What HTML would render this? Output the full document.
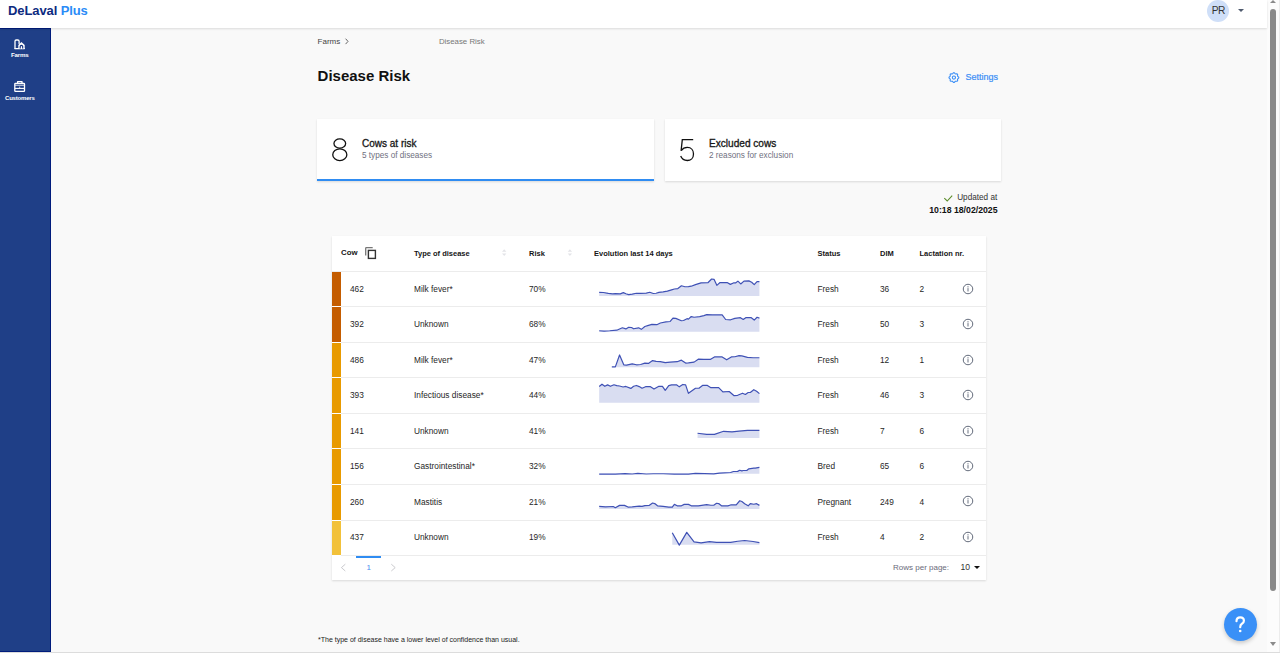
<!DOCTYPE html>
<html><head><meta charset="utf-8">
<style>
*{margin:0;padding:0;box-sizing:border-box}
html,body{width:1280px;height:653px;overflow:hidden;background:#f9f9f9;font-family:"Liberation Sans",sans-serif;color:#161616}
.a{position:absolute;white-space:nowrap}
#hdr{position:absolute;z-index:2;left:0;top:0;width:1267px;height:28px;background:#fff;box-shadow:0 1px 2px rgba(0,0,0,0.12)}
#side{position:absolute;left:0;top:28px;width:51px;height:624px;border-top:1px solid #001c7c;background:#1f3f87;border-right:1px solid #001c7c;border-bottom:1px solid #001c7c}
.card{position:absolute;background:#fff;box-shadow:0 1px 2px rgba(0,0,0,0.13)}
.t8{font-size:8px}
.th{font-size:7.5px;font-weight:bold;color:#161616}
.td{font-size:8.3px;color:#262626}
</style></head><body>
<div id="hdr">
  <div class="a" style="left:8px;top:2.7px;font-size:13px;font-weight:bold;color:#0d2a80;letter-spacing:-0.1px">DeLaval <span style="color:#2a8bf7">Plus</span></div>
  <div class="a" style="left:1207px;top:-0.5px;width:22px;height:22px;border-radius:50%;background:#cfdff8"></div>
  <div class="a" style="left:1211.8px;top:5.2px;font-size:10.2px;letter-spacing:-0.7px;color:#333">PR</div>
  <div class="a" style="left:1238.2px;top:9.3px;width:0;height:0;border-left:3.1px solid transparent;border-right:3.1px solid transparent;border-top:3.7px solid #4f5a6e"></div>
</div>
<div id="side"></div>
<div class="a" style="left:11px;top:51.3px;font-size:6.2px;letter-spacing:-0.2px;font-weight:bold;color:#fff">Farms</div>
<div class="a" style="left:5px;top:94.5px;font-size:6px;letter-spacing:-0.2px;font-weight:bold;color:#fff">Customers</div>

<div class="a t8" style="left:317.6px;top:36.5px;color:#444">Farms</div>
<svg class="a" style="left:340px;top:34px" width="12" height="14" viewBox="340 34 12 14"><path d="M345.6,38.7 L348,41.4 L345.6,44.1" fill="none" stroke="#555" stroke-width="0.9"/></svg>
<div class="a" style="left:438.9px;top:36.6px;font-size:7.85px;color:#777">Disease Risk</div>
<div class="a" style="left:317.6px;top:66.5px;font-size:15px;font-weight:bold;color:#111">Disease Risk</div>
<div class="a" style="left:965.6px;top:71.6px;font-size:9px;color:#3a8ef6;-webkit-text-stroke:0.2px #3a8ef6">Settings</div>

<div class="card" style="left:317px;top:119px;width:337px;height:62px"></div>
<div class="a" style="left:317px;top:179px;width:337px;height:2px;background:#2f8cf2"></div>
<div class="card" style="left:665px;top:119px;width:336px;height:62px"></div>
<div class="a" style="left:362px;top:138px;font-size:10px;color:#161616;-webkit-text-stroke:0.3px #161616">Cows at risk</div>
<div class="a" style="left:362px;top:150.5px;font-size:8.2px;color:#6f6f80">5 types of diseases</div>
<div class="a" style="left:709px;top:138px;font-size:10.1px;color:#161616;-webkit-text-stroke:0.3px #161616">Excluded cows</div>
<div class="a" style="left:709px;top:151px;font-size:8.2px;color:#6f6f80">2 reasons for exclusion</div>

<div class="a" style="left:957.2px;top:192.6px;font-size:8.2px;color:#333">Updated at</div>
<div class="a" style="left:929.2px;top:204.8px;font-size:8.72px;font-weight:bold;color:#111">10:18 18/02/2025</div>

<div class="card" style="left:332px;top:236px;width:654px;height:344px"></div>
<div class="a" style="left:332px;top:271px;width:654px;height:1px;background:#ececec"></div>
<div class="a th" style="left:341px;top:247.6px;font-size:7.8px">Cow</div>
<div class="a th" style="left:414px;top:248.7px">Type of disease</div>
<div class="a th" style="left:529px;top:248.7px">Risk</div>
<div class="a th" style="left:594px;top:248.7px">Evolution last 14 days</div>
<div class="a th" style="left:817.5px;top:248.7px">Status</div>
<div class="a th" style="left:880px;top:248.7px">DIM</div>
<div class="a th" style="left:919.5px;top:248.7px">Lactation nr.</div>
<div class="a" style="left:332px;top:271.70px;width:8.5px;height:34.55px;background:#c45c00"></div>
<div class="a" style="left:340.5px;top:306.25px;width:645.5px;height:1px;background:#ececec"></div>
<div class="a td" style="left:350px;top:283.60px">462</div>
<div class="a td" style="left:414px;top:283.60px">Milk fever*</div>
<div class="a td" style="left:529px;top:283.60px">70%</div>
<div class="a td" style="left:817.5px;top:283.60px">Fresh</div>
<div class="a td" style="left:880px;top:283.60px">36</div>
<div class="a td" style="left:919.5px;top:283.60px">2</div>
<svg class="a" style="left:962px;top:282.50px" width="12" height="12" viewBox="0 0 12 12"><circle cx="6" cy="6" r="4.75" fill="none" stroke="#5a6273" stroke-width="0.95"/><circle cx="6" cy="3.8" r="0.65" fill="#5a6273"/><rect x="5.55" y="5.1" width="0.9" height="3.4" fill="#5a6273"/></svg>
<div class="a" style="left:332px;top:307.25px;width:8.5px;height:34.55px;background:#c45c00"></div>
<div class="a" style="left:340.5px;top:341.80px;width:645.5px;height:1px;background:#ececec"></div>
<div class="a td" style="left:350px;top:319.10px">392</div>
<div class="a td" style="left:414px;top:319.10px">Unknown</div>
<div class="a td" style="left:529px;top:319.10px">68%</div>
<div class="a td" style="left:817.5px;top:319.10px">Fresh</div>
<div class="a td" style="left:880px;top:319.10px">50</div>
<div class="a td" style="left:919.5px;top:319.10px">3</div>
<svg class="a" style="left:962px;top:318.00px" width="12" height="12" viewBox="0 0 12 12"><circle cx="6" cy="6" r="4.75" fill="none" stroke="#5a6273" stroke-width="0.95"/><circle cx="6" cy="3.8" r="0.65" fill="#5a6273"/><rect x="5.55" y="5.1" width="0.9" height="3.4" fill="#5a6273"/></svg>
<div class="a" style="left:332px;top:342.80px;width:8.5px;height:34.55px;background:#e89a00"></div>
<div class="a" style="left:340.5px;top:377.35px;width:645.5px;height:1px;background:#ececec"></div>
<div class="a td" style="left:350px;top:355.00px">486</div>
<div class="a td" style="left:414px;top:355.00px">Milk fever*</div>
<div class="a td" style="left:529px;top:355.00px">47%</div>
<div class="a td" style="left:817.5px;top:355.00px">Fresh</div>
<div class="a td" style="left:880px;top:355.00px">12</div>
<div class="a td" style="left:919.5px;top:355.00px">1</div>
<svg class="a" style="left:962px;top:353.90px" width="12" height="12" viewBox="0 0 12 12"><circle cx="6" cy="6" r="4.75" fill="none" stroke="#5a6273" stroke-width="0.95"/><circle cx="6" cy="3.8" r="0.65" fill="#5a6273"/><rect x="5.55" y="5.1" width="0.9" height="3.4" fill="#5a6273"/></svg>
<div class="a" style="left:332px;top:378.35px;width:8.5px;height:34.55px;background:#e89a00"></div>
<div class="a" style="left:340.5px;top:412.90px;width:645.5px;height:1px;background:#ececec"></div>
<div class="a td" style="left:350px;top:390.30px">393</div>
<div class="a td" style="left:414px;top:390.30px">Infectious disease*</div>
<div class="a td" style="left:529px;top:390.30px">44%</div>
<div class="a td" style="left:817.5px;top:390.30px">Fresh</div>
<div class="a td" style="left:880px;top:390.30px">46</div>
<div class="a td" style="left:919.5px;top:390.30px">3</div>
<svg class="a" style="left:962px;top:389.20px" width="12" height="12" viewBox="0 0 12 12"><circle cx="6" cy="6" r="4.75" fill="none" stroke="#5a6273" stroke-width="0.95"/><circle cx="6" cy="3.8" r="0.65" fill="#5a6273"/><rect x="5.55" y="5.1" width="0.9" height="3.4" fill="#5a6273"/></svg>
<div class="a" style="left:332px;top:413.90px;width:8.5px;height:34.55px;background:#e89a00"></div>
<div class="a" style="left:340.5px;top:448.45px;width:645.5px;height:1px;background:#ececec"></div>
<div class="a td" style="left:350px;top:426.10px">141</div>
<div class="a td" style="left:414px;top:426.10px">Unknown</div>
<div class="a td" style="left:529px;top:426.10px">41%</div>
<div class="a td" style="left:817.5px;top:426.10px">Fresh</div>
<div class="a td" style="left:880px;top:426.10px">7</div>
<div class="a td" style="left:919.5px;top:426.10px">6</div>
<svg class="a" style="left:962px;top:425.00px" width="12" height="12" viewBox="0 0 12 12"><circle cx="6" cy="6" r="4.75" fill="none" stroke="#5a6273" stroke-width="0.95"/><circle cx="6" cy="3.8" r="0.65" fill="#5a6273"/><rect x="5.55" y="5.1" width="0.9" height="3.4" fill="#5a6273"/></svg>
<div class="a" style="left:332px;top:449.45px;width:8.5px;height:34.55px;background:#e89a00"></div>
<div class="a" style="left:340.5px;top:484.00px;width:645.5px;height:1px;background:#ececec"></div>
<div class="a td" style="left:350px;top:461.10px">156</div>
<div class="a td" style="left:414px;top:461.10px">Gastrointestinal*</div>
<div class="a td" style="left:529px;top:461.10px">32%</div>
<div class="a td" style="left:817.5px;top:461.10px">Bred</div>
<div class="a td" style="left:880px;top:461.10px">65</div>
<div class="a td" style="left:919.5px;top:461.10px">6</div>
<svg class="a" style="left:962px;top:460.00px" width="12" height="12" viewBox="0 0 12 12"><circle cx="6" cy="6" r="4.75" fill="none" stroke="#5a6273" stroke-width="0.95"/><circle cx="6" cy="3.8" r="0.65" fill="#5a6273"/><rect x="5.55" y="5.1" width="0.9" height="3.4" fill="#5a6273"/></svg>
<div class="a" style="left:332px;top:485.00px;width:8.5px;height:34.55px;background:#e89a00"></div>
<div class="a" style="left:340.5px;top:519.55px;width:645.5px;height:1px;background:#ececec"></div>
<div class="a td" style="left:350px;top:496.50px">260</div>
<div class="a td" style="left:414px;top:496.50px">Mastitis</div>
<div class="a td" style="left:529px;top:496.50px">21%</div>
<div class="a td" style="left:817.5px;top:496.50px">Pregnant</div>
<div class="a td" style="left:880px;top:496.50px">249</div>
<div class="a td" style="left:919.5px;top:496.50px">4</div>
<svg class="a" style="left:962px;top:495.40px" width="12" height="12" viewBox="0 0 12 12"><circle cx="6" cy="6" r="4.75" fill="none" stroke="#5a6273" stroke-width="0.95"/><circle cx="6" cy="3.8" r="0.65" fill="#5a6273"/><rect x="5.55" y="5.1" width="0.9" height="3.4" fill="#5a6273"/></svg>
<div class="a" style="left:332px;top:520.55px;width:8.5px;height:34.55px;background:#f2c13a"></div>
<div class="a" style="left:340.5px;top:555.10px;width:645.5px;height:1px;background:#ececec"></div>
<div class="a td" style="left:350px;top:532.20px">437</div>
<div class="a td" style="left:414px;top:532.20px">Unknown</div>
<div class="a td" style="left:529px;top:532.20px">19%</div>
<div class="a td" style="left:817.5px;top:532.20px">Fresh</div>
<div class="a td" style="left:880px;top:532.20px">4</div>
<div class="a td" style="left:919.5px;top:532.20px">2</div>
<svg class="a" style="left:962px;top:531.10px" width="12" height="12" viewBox="0 0 12 12"><circle cx="6" cy="6" r="4.75" fill="none" stroke="#5a6273" stroke-width="0.95"/><circle cx="6" cy="3.8" r="0.65" fill="#5a6273"/><rect x="5.55" y="5.1" width="0.9" height="3.4" fill="#5a6273"/></svg>
<svg class="a" style="left:590px;top:272px" width="180" height="70" viewBox="0 0 1280 498"><polygon points="65,145 95,146 130,152 160,156 180,154 215,156 237,147 255,155 275,161 300,157 330,151 360,152 400,150 425,144 450,153 470,151 490,145 520,141 550,136 580,127 600,121 625,118 650,98 675,105 700,104 720,101 750,90 790,77 840,75 865,50 882,52 902,95 925,75 975,75 998,88 1020,78 1035,78 1052,65 1072,85 1095,65 1130,63 1150,73 1168,90 1188,68 1205,68 1205,170 65,170" fill="#d9ddf1"/><polyline points="65,145 95,146 130,152 160,156 180,154 215,156 237,147 255,155 275,161 300,157 330,151 360,152 400,150 425,144 450,153 470,151 490,145 520,141 550,136 580,127 600,121 625,118 650,98 675,105 700,104 720,101 750,90 790,77 840,75 865,50 882,52 902,95 925,75 975,75 998,88 1020,78 1035,78 1052,65 1072,85 1095,65 1130,63 1150,73 1168,90 1188,68 1205,68" fill="none" stroke="#3f51b5" stroke-width="8.5" stroke-linejoin="round"/><polygon points="65,418 100,420 140,418 190,414 230,397 255,405 275,393 295,395 310,404 345,397 365,408 390,388 410,382 440,373 475,375 500,363 540,355 570,352 590,328 610,330 650,347 665,345 690,332 700,335 720,317 740,322 780,318 810,310 830,303 870,305 940,305 965,338 1000,340 1030,330 1070,325 1090,338 1110,324 1145,324 1168,342 1188,322 1205,328 1205,425 65,425" fill="#d9ddf1"/><polyline points="65,418 100,420 140,418 190,414 230,397 255,405 275,393 295,395 310,404 345,397 365,408 390,388 410,382 440,373 475,375 500,363 540,355 570,352 590,328 610,330 650,347 665,345 690,332 700,335 720,317 740,322 780,318 810,310 830,303 870,305 940,305 965,338 1000,340 1030,330 1070,325 1090,338 1110,324 1145,324 1168,342 1188,322 1205,328" fill="none" stroke="#3f51b5" stroke-width="8.5" stroke-linejoin="round"/></svg>
<svg class="a" style="left:590px;top:343px" width="180" height="70" viewBox="0 0 1280 498"><polygon points="155,170 180,170 210,85 240,155 260,157 300,148 330,155 360,153 390,143 415,145 445,125 470,131 500,132 535,140 570,136 620,133 650,122 680,143 700,142 740,136 770,115 810,117 855,117 885,99 940,99 972,120 1005,99 1030,98 1060,90 1080,92 1120,102 1160,105 1205,105 1205,172 155,172" fill="#d9ddf1"/><polyline points="155,170 180,170 210,85 240,155 260,157 300,148 330,155 360,153 390,143 415,145 445,125 470,131 500,132 535,140 570,136 620,133 650,122 680,143 700,142 740,136 770,115 810,117 855,117 885,99 940,99 972,120 1005,99 1030,98 1060,90 1080,92 1120,102 1160,105 1205,105" fill="none" stroke="#3f51b5" stroke-width="8.5" stroke-linejoin="round"/><polygon points="65,310 85,293 105,308 125,298 145,308 170,297 190,303 210,306 235,313 255,309 290,323 310,308 330,302 350,310 370,322 395,311 430,311 455,328 490,308 515,308 535,337 560,303 580,298 615,297 635,312 660,295 680,298 700,358 750,322 775,322 800,302 835,302 860,318 915,318 945,348 990,345 1025,375 1050,372 1085,357 1105,366 1125,352 1140,352 1165,332 1185,343 1205,360 1205,425 65,425" fill="#d9ddf1"/><polyline points="65,310 85,293 105,308 125,298 145,308 170,297 190,303 210,306 235,313 255,309 290,323 310,308 330,302 350,310 370,322 395,311 430,311 455,328 490,308 515,308 535,337 560,303 580,298 615,297 635,312 660,295 680,298 700,358 750,322 775,322 800,302 835,302 860,318 915,318 945,348 990,345 1025,375 1050,372 1085,357 1105,366 1125,352 1140,352 1165,332 1185,343 1205,360" fill="none" stroke="#3f51b5" stroke-width="8.5" stroke-linejoin="round"/></svg>
<svg class="a" style="left:590px;top:414px" width="180" height="70" viewBox="0 0 1280 498"><polygon points="765,137 830,145 885,145 950,123 1010,127 1060,122 1120,117 1205,117 1205,170 765,170" fill="#d9ddf1"/><polyline points="765,137 830,145 885,145 950,123 1010,127 1060,122 1120,117 1205,117" fill="none" stroke="#3f51b5" stroke-width="8.5" stroke-linejoin="round"/><polygon points="65,428 180,428 250,424 300,427 340,423 400,427 450,425 520,425 600,428 700,428 750,423 880,426 920,420 1000,416 1020,409 1050,408 1065,400 1080,405 1090,402 1115,402 1130,390 1165,385 1175,385 1205,380 1205,425 65,425" fill="#d9ddf1"/><polyline points="65,428 180,428 250,424 300,427 340,423 400,427 450,425 520,425 600,428 700,428 750,423 880,426 920,420 1000,416 1020,409 1050,408 1065,400 1080,405 1090,402 1115,402 1130,390 1165,385 1175,385 1205,380" fill="none" stroke="#3f51b5" stroke-width="8.5" stroke-linejoin="round"/></svg>
<svg class="a" style="left:590px;top:485px" width="180" height="70" viewBox="0 0 1280 498"><polygon points="65,152 110,155 165,153 180,162 210,145 245,145 270,157 300,155 350,150 370,152 390,147 420,146 445,128 460,132 480,148 520,152 560,157 585,157 600,138 620,148 650,148 670,138 700,138 720,148 770,148 830,140 860,144 880,144 900,130 915,132 935,148 980,148 1000,142 1040,142 1065,112 1080,117 1100,133 1125,148 1140,132 1165,137 1185,133 1205,145 1205,170 65,170" fill="#d9ddf1"/><polyline points="65,152 110,155 165,153 180,162 210,145 245,145 270,157 300,155 350,150 370,152 390,147 420,146 445,128 460,132 480,148 520,152 560,157 585,157 600,138 620,148 650,148 670,138 700,138 720,148 770,148 830,140 860,144 880,144 900,130 915,132 935,148 980,148 1000,142 1040,142 1065,112 1080,117 1100,133 1125,148 1140,132 1165,137 1185,133 1205,145" fill="none" stroke="#3f51b5" stroke-width="8.5" stroke-linejoin="round"/><polygon points="585,340 635,428 688,337 740,405 790,412 850,403 900,408 1000,408 1050,400 1100,395 1160,402 1205,410 1205,425 585,425" fill="#d9ddf1"/><polyline points="585,340 635,428 688,337 740,405 790,412 850,403 900,408 1000,408 1050,400 1100,395 1160,402 1205,410" fill="none" stroke="#3f51b5" stroke-width="8.5" stroke-linejoin="round"/></svg>

<div class="a" style="left:356px;top:555.6px;width:25px;height:2px;background:#2f8cf2"></div>
<div class="a" style="left:366.5px;top:563px;font-size:8px;color:#4a90f0">1</div>
<div class="a t8" style="left:893px;top:562.6px;color:#6a6a7a">Rows per page:</div>
<div class="a" style="left:960.5px;top:562.3px;font-size:8.6px;color:#333">10</div>
<div class="a" style="left:974px;top:566px;width:0;height:0;border-left:3px solid transparent;border-right:3px solid transparent;border-top:3.5px solid #111"></div>


<div class="a" style="left:1223.5px;top:607.7px;width:33.5px;height:33.5px;border-radius:50%;background:#3a90f7;box-shadow:0 2px 4px rgba(0,0,0,0.2)"></div>
<svg class="a" style="left:0;top:0" width="1280" height="653" viewBox="0 0 1280 653">
  <!-- farms icon -->
  <g fill="none" stroke="#fff" stroke-width="1.3" stroke-linejoin="round" stroke-linecap="round">
    <path d="M15,48.6 V41.2 Q15,40 16.2,40 H17.8 Q19.1,40 19.1,41.3 V43.6"/>
    <path d="M15,48.6 H24.3"/>
  </g>
  <path d="M18.3,48.9 V45 L21.4,41.9 L24.7,45 V48.9Z" fill="#fff"/>
  <path d="M20.2,48.6 V46.3 Q21.45,44.4 22.7,46.3 V48.6" fill="none" stroke="#0a2a7a" stroke-width="1.1"/>
  <!-- customers icon -->
  <g fill="none" stroke="#fff" stroke-width="1.3" stroke-linejoin="round">
    <rect x="14.8" y="83.3" width="9.7" height="8.1" rx="0.6"/>
    <path d="M17.6,83.3 V81.6 H22 V83.3"/>
    <path d="M14.8,88.4 H24.5" stroke-width="1.1"/>
    <path d="M19.7,86.6 V88.4" stroke-width="0.8"/>
    <path d="M14.8,85.2 H24.5" stroke-width="0.9"/>
  </g>
  <!-- gear -->
  <path d="M953.90,72.65 L954.37,72.82 L954.77,73.24 L955.09,73.68 L955.41,73.95 L955.83,73.99 L956.37,73.90 L956.95,73.89 L957.40,74.10 L957.61,74.55 L957.60,75.13 L957.51,75.67 L957.55,76.09 L957.82,76.41 L958.26,76.73 L958.68,77.13 L958.85,77.60 L958.68,78.07 L958.26,78.47 L957.82,78.79 L957.55,79.11 L957.51,79.53 L957.60,80.07 L957.61,80.65 L957.40,81.10 L956.95,81.31 L956.37,81.30 L955.83,81.21 L955.41,81.25 L955.09,81.52 L954.77,81.96 L954.37,82.38 L953.90,82.55 L953.43,82.38 L953.03,81.96 L952.71,81.52 L952.39,81.25 L951.97,81.21 L951.43,81.30 L950.85,81.31 L950.40,81.10 L950.19,80.65 L950.20,80.07 L950.29,79.53 L950.25,79.11 L949.98,78.79 L949.54,78.47 L949.12,78.07 L948.95,77.60 L949.12,77.13 L949.54,76.73 L949.98,76.41 L950.25,76.09 L950.29,75.67 L950.20,75.13 L950.19,74.55 L950.40,74.10 L950.85,73.89 L951.43,73.90 L951.97,73.99 L952.39,73.95 L952.71,73.68 L953.03,73.24 L953.43,72.82Z" fill="none" stroke="#3a8ef6" stroke-width="1.1" stroke-linejoin="round"/>
  <circle cx="953.9" cy="77.6" r="1.6" fill="none" stroke="#3a8ef6" stroke-width="1.1"/>
  <!-- digits -->
  <g fill="none" stroke="#111" stroke-width="1.3">
    <ellipse cx="339.8" cy="143.45" rx="5.85" ry="4.6"/>
    <ellipse cx="339.8" cy="154.7" rx="7.05" ry="5.85"/>
    <path d="M693.2,139.6 H682.3 L681.1,150.8"/>
    <path d="M681.2,150.6 C683,148.1 685,147.4 687.3,147.4 C691.3,147.4 693.5,150.5 693.5,154 C693.5,158 690.8,160.5 687.3,160.5 C684,160.5 681.8,158.8 680.7,156"/>
  </g>
  <!-- check -->
  <path d="M944.3,198.2 L947.2,201 L952.2,195.6" fill="none" stroke="#5b8c2a" stroke-width="1.1"/>
  <!-- copy icon -->
  <path d="M365.7,255.6 V248.3 Q365.7,247.7 366.3,247.7 H372.7" fill="none" stroke="#777" stroke-width="1.3"/>
  <rect x="368.4" y="250.4" width="7" height="8" fill="#fff" stroke="#333" stroke-width="1.4"/>
  <!-- sort icons -->
  <g fill="#e3e4e8">
    <path d="M502,251.8 L504.2,249.3 L506.4,251.8Z M502,253.4 L504.2,255.9 L506.4,253.4Z"/>
    <path d="M567.7,251.8 L569.9,249.3 L572.1,251.8Z M567.7,253.4 L569.9,255.9 L572.1,253.4Z"/>
  </g>
  <!-- pagination arrows -->
  <path d="M345.3,564.2 L341.4,567.6 L345.3,571" fill="none" stroke="#c4c4c8" stroke-width="0.9"/>
  <path d="M391.3,564.2 L395.2,567.6 L391.3,571" fill="none" stroke="#c4c4c8" stroke-width="0.9"/>
  <!-- help ? -->
  <path d="M1236.5,621.2 Q1236.5,617.3 1240.2,617.3 Q1243.9,617.3 1243.9,620.7 Q1243.9,622.6 1241.9,623.8 Q1240.2,624.8 1240.2,627.2" fill="none" stroke="#fff" stroke-width="2.2" stroke-linecap="round"/>
  <circle cx="1240.2" cy="631" r="1.3" fill="#fff"/>
</svg>

<div class="a" style="left:318px;top:636px;font-size:7px;color:#222">*The type of disease have a lower level of confidence than usual.</div>

<div class="a" style="left:1267px;top:0;width:13px;height:653px;background:#fcfcfc"></div>
<div class="a" style="left:1278.5px;top:0;width:1px;height:653px;background:#ececec"></div>
<div class="a" style="left:1270px;top:9px;width:6px;height:582px;border-radius:3px;background:#8a8a8a"></div>
<div class="a" style="left:1270px;top:0;width:0;height:0;border-left:3px solid transparent;border-right:3px solid transparent;border-bottom:3px solid #8a8a8a"></div>
<div class="a" style="left:1270px;top:642px;width:0;height:0;border-left:3px solid transparent;border-right:3px solid transparent;border-top:4px solid #8a8a8a"></div>
<div class="a" style="left:0;top:652px;width:1280px;height:1px;background:#dcdcdc"></div>
</body></html>
